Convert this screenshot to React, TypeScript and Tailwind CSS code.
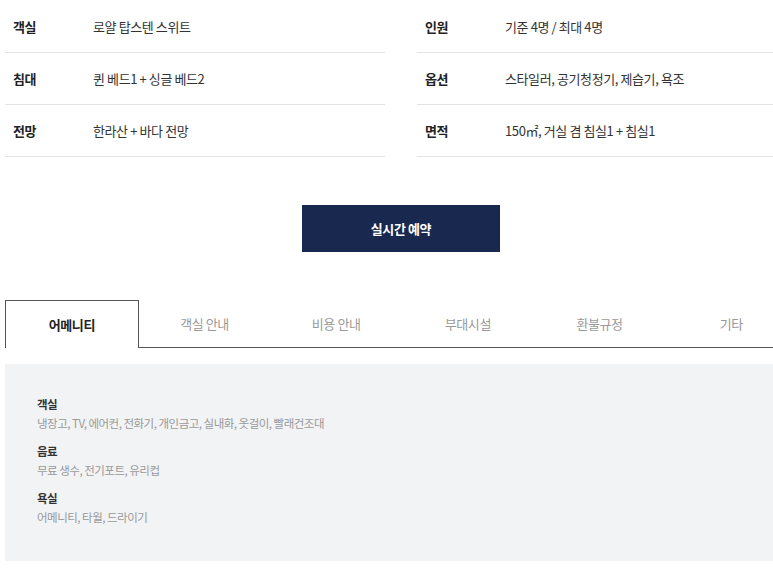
const font = { fontFamily: '"Noto Sans CJK KR", "Noto Sans", sans-serif' };

const leftRows = [
  { label: '객실', value: '로얄 탑스텐 스위트' },
  { label: '침대', value: '퀸 베드1 + 싱글 베드2' },
  { label: '전망', value: '한라산 + 바다 전망' },
];

const rightRows = [
  { label: '인원', value: '기준 4명 / 최대 4명' },
  { label: '옵션', value: '스타일러, 공기청정기, 제습기, 욕조' },
  { label: '면적', value: '150㎡, 거실 겸 침실1 + 침실1' },
];

const tabs = ['어메니티', '객실 안내', '비용 안내', '부대시설', '환불규정', '기타'];

const amenities = [
  { title: '객실', items: '냉장고, TV, 에어컨, 전화기, 개인금고, 실내화, 옷걸이, 빨래건조대' },
  { title: '음료', items: '무료 생수, 전기포트, 유리컵' },
  { title: '욕실', items: '어메니티, 타월, 드라이기' },
];

function InfoColumn({ rows }: { rows: { label: string; value: string }[] }) {
  return (
    <div>
      {rows.map((r) => (
        <div key={r.label} className="flex items-center h-[52px] border-b border-[#e3e3e3] pl-[8px]">
          <span className="w-[80px] text-[13px] font-bold text-[#222] tracking-[-0.4px]">{r.label}</span>
          <span className="text-[13px] text-[#333] tracking-[-0.4px]">{r.value}</span>
        </div>
      ))}
    </div>
  );
}

export default function App() {
  return (
    <div className="bg-white overflow-hidden h-[581px] pt-[1px]" style={font}>
      <div className="ml-[5px] w-[792px]">
        <div className="grid grid-cols-2 gap-x-[32px]">
          <InfoColumn rows={leftRows} />
          <InfoColumn rows={rightRows} />
        </div>

        <div className="flex justify-center mt-[48px]">
          <button className="w-[198px] h-[47px] bg-[#18284f] text-white text-[13px] font-bold tracking-[-0.4px]">
            실시간 예약
          </button>
        </div>

        <div className="flex mt-[48px] border-b border-[#555]">
          {tabs.map((t, i) => (
            <div
              key={t}
              className={
                i === 0
                  ? 'flex-1 h-[48px] -mb-px flex items-center justify-center border border-b-0 border-[#555] bg-white text-[13px] font-bold text-[#222] tracking-[-0.4px]'
                  : 'flex-1 h-[47px] flex items-center justify-center text-[13px] text-[#999] tracking-[-0.4px]'
              }
            >
              {t}
            </div>
          ))}
        </div>

        <div className="mt-[16px] h-[197px] bg-[#f2f3f5] pl-[32px] pt-[31px]">
          {amenities.map((a) => (
            <div key={a.title} className="mb-[9px]">
              <div className="text-[11.5px] font-bold text-[#333] leading-[19px] tracking-[-0.5px]">{a.title}</div>
              <div className="text-[11.5px] text-[#999] leading-[19px] tracking-[-0.5px]">{a.items}</div>
            </div>
          ))}
        </div>
      </div>
    </div>
  );
}
